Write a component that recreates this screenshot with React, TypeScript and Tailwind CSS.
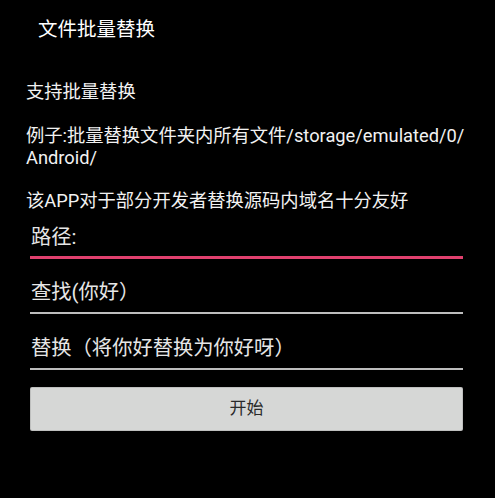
import React from "react";

const font = { fontFamily: '"Roboto", "Noto Sans CJK SC", sans-serif' };

function Field({ label, focused }: { label: string; focused?: boolean }) {
  return (
    <div className="h-[56px] flex flex-col justify-end">
      <div className="text-[20.3px] leading-[26px] text-[#e6e6e6] pl-[1px]">{label}</div>
      <div
        className={
          focused
            ? "mt-[6px] mb-[0px] h-[3px] bg-[#e0406e]"
            : "mt-[7px] mb-[1px] h-[2px] bg-[#bdbdbd]"
        }
      />
    </div>
  );
}

export default function App() {
  return (
    <div className="w-[495px] h-[498px] bg-black text-[#f2f2f2] overflow-hidden" style={font}>
      <div className="pt-[16px] pl-[38px] text-[19.5px] leading-[28px] text-white">文件批量替换</div>
      <div className="px-[26px] pt-[36px] text-[18.3px]">
        <div className="leading-[24px]">支持批量替换</div>
        <div className="leading-[22px] mt-[21px]">
          例子:批量替换文件夹内所有文件/storage/emulated/0/
          <br />
          Android/
        </div>
        <div className="leading-[24px] mt-[20px]">该APP对于部分开发者替换源码内域名十分友好</div>
      </div>
      <div className="pl-[30px] pr-[32px] -mt-[10px]">
        <Field label="路径:" focused />
        <Field label="查找(你好）" />
        <Field label="替换（将你好替换为你好呀）" />
        <button className="mt-[16px] w-full h-[44px] rounded-[2px] bg-[#d6d7d6] border border-[#9a9a9a]/40 text-[17px] text-[#2a2a2a]">
          开始
        </button>
      </div>
    </div>
  );
}
